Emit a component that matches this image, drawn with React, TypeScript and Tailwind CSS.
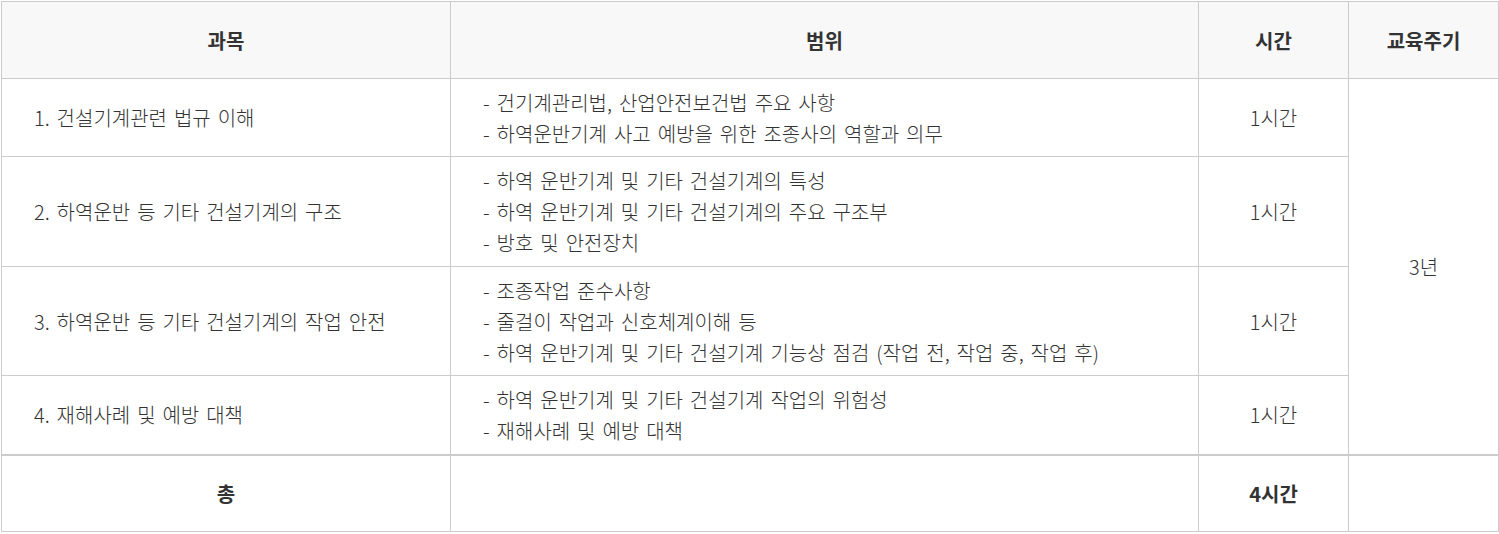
const rows = [
  {
    title: "1. 건설기계관련 법규 이해",
    items: ["건기계관리법, 산업안전보건법 주요 사항", "하역운반기계 사고 예방을 위한 조종사의 역할과 의무"],
    hours: "1시간",
    h: "h-[78px]",
  },
  {
    title: "2. 하역운반 등 기타 건설기계의 구조",
    items: ["하역 운반기계 및 기타 건설기계의 특성", "하역 운반기계 및 기타 건설기계의 주요 구조부", "방호 및 안전장치"],
    hours: "1시간",
    h: "h-[110px]",
  },
  {
    title: "3. 하역운반 등 기타 건설기계의 작업 안전",
    items: ["조종작업 준수사항", "줄걸이 작업과 신호체계이해 등", "하역 운반기계 및 기타 건설기계 기능상 점검 (작업 전, 작업 중, 작업 후)"],
    hours: "1시간",
    h: "h-[109px]",
  },
  {
    title: "4. 재해사례 및 예방 대책",
    items: ["하역 운반기계 및 기타 건설기계 작업의 위험성", "재해사례 및 예방 대책"],
    hours: "1시간",
    h: "h-[79px]",
  },
];

export default function App() {
  return (
    <div className="bg-white min-h-screen pt-px pl-px" style={{ fontFamily: "'Noto Sans CJK KR', 'Noto Sans', sans-serif" }}>
      <table className="table-fixed border-collapse w-[1497px] text-[20px] leading-[31px] font-light text-[#333] [word-spacing:2.5px]">
        <colgroup>
          <col className="w-[449px]" />
          <col className="w-[748px]" />
          <col className="w-[150px]" />
          <col className="w-[150px]" />
        </colgroup>
        <thead>
          <tr className="h-[77px] bg-[#f8f8f8]">
            <th className="border border-[#cccccc] font-bold text-center">과목</th>
            <th className="border border-[#cccccc] font-bold text-center">범위</th>
            <th className="border border-[#cccccc] font-bold text-center">시간</th>
            <th className="border border-[#cccccc] font-bold text-center">교육주기</th>
          </tr>
        </thead>
        <tbody>
          {rows.map((r, i) => (
            <tr key={i} className={r.h}>
              <td className="border border-[#cccccc] pl-8 align-middle">{r.title}</td>
              <td className="border border-[#cccccc] pl-8 align-middle">
                {r.items.map((t) => (
                  <div key={t}>- {t}</div>
                ))}
              </td>
              <td className="border border-[#cccccc] text-center align-middle">{r.hours}</td>
              {i === 0 && (
                <td rowSpan={4} className="border border-[#cccccc] text-center align-middle">
                  3년
                </td>
              )}
            </tr>
          ))}
          <tr className="h-[77px]">
            <td className="border border-[#cccccc] border-t-2 text-center font-bold">총</td>
            <td className="border border-[#cccccc] border-t-2"></td>
            <td className="border border-[#cccccc] border-t-2 text-center font-bold">4시간</td>
            <td className="border border-[#cccccc] border-t-2"></td>
          </tr>
        </tbody>
      </table>
    </div>
  );
}
